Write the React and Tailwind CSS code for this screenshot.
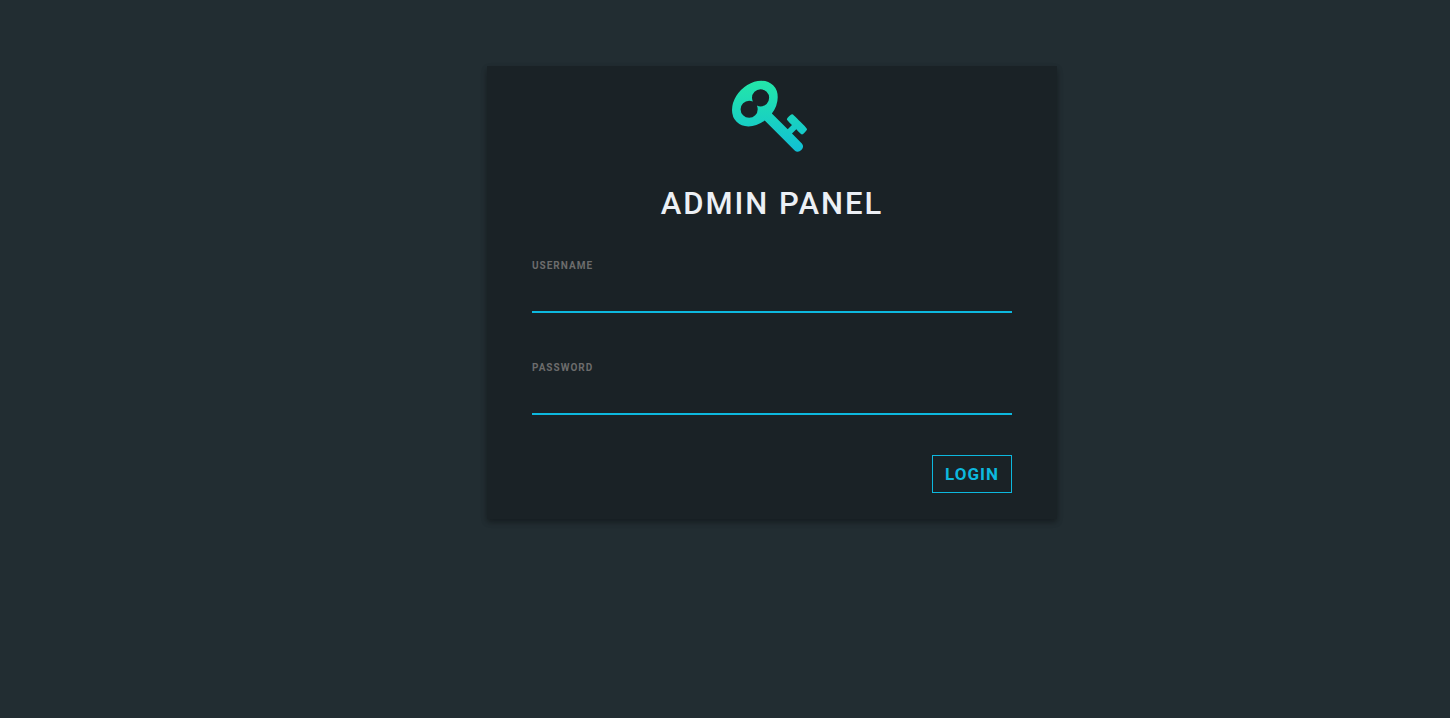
function KeyIcon() {
  return (
    <svg viewBox="0 0 1792 1792" className="size-20" aria-hidden="true">
      <defs>
        <linearGradient id="key-fill" gradientUnits="userSpaceOnUse" x1="0" y1="-202" x2="0" y2="2038">
          <stop offset="0" stopColor="#27EF9F" />
          <stop offset="1" stopColor="#0DB8DE" />
        </linearGradient>
      </defs>
      <path
        fill="url(#key-fill)"
        d="M832 512q0-80-56-136t-136-56-136 56-56 136q0 42 19 83-41-19-83-19-80 0-136 56t-56 136 56 136 136 56 136-56 56-136q0-42-19-83 41 19 83 19 80 0 136-56t56-136zm851 704q0 17-49 66t-66 49q-9 0-28.5-16t-36.5-33-38.5-40-24.5-26l-96 96 220 220q28 28 28 68 0 42-39 81t-81 39q-40 0-68-28l-671-671q-176 131-365 131-163 0-265.5-102.5t-102.5-265.5q0-160 95-313t248-248 313-95q163 0 265.5 102.5t102.5 265.5q0 189-131 365l355 355 96-96q-3-3-26-24.5t-40-38.5-33-36.5-16-28.5q0-17 49-66t66-49q13 0 23 10 6 6 46 44.5t82 79.5 86.5 86 73 78 28.5 41z"
      />
    </svg>
  );
}

function Field({ id, label, type }) {
  return (
    <div className="flex flex-col">
      <label htmlFor={id} className="text-[10px] leading-4 font-bold tracking-[1px] text-[#6C6C6C]">
        {label}
      </label>
      <input
        id={id}
        name={id}
        type={type}
        className="h-[39px] w-full border-b-2 border-[#0DB8DE] bg-transparent text-base font-bold text-[#ECF0F5] outline-none"
      />
    </div>
  );
}

export default function App() {
  return (
    <div className="min-h-screen bg-[#222D32] pt-[66px] pl-[94px] font-['Roboto',sans-serif]">
      <main className="mx-auto w-full max-w-[570px] bg-[#1A2226] pb-[26px] text-center shadow-[0_3px_6px_rgba(0,0,0,0.16),0_3px_6px_rgba(0,0,0,0.23)]">
        <div className="flex h-[100px] items-center justify-center pb-0.5">
          <KeyIcon />
        </div>
        <h1 className="mt-4 text-[31px] leading-[44px] font-medium tracking-[2px] text-[#ECF0F5]">ADMIN PANEL</h1>
        <form className="mt-8 flex flex-col px-[45px] text-left" onSubmit={(e) => e.preventDefault()}>
          <div className="flex flex-col gap-[47px]">
            <Field id="username" label="USERNAME" type="text" />
            <Field id="password" label="PASSWORD" type="password" />
          </div>
          <button
            type="submit"
            className="mt-10 h-[38px] self-end border border-[#0DB8DE] px-3 text-[17px] leading-6 font-bold tracking-[1px] text-[#0DB8DE]"
          >
            LOGIN
          </button>
        </form>
      </main>
    </div>
  );
}
